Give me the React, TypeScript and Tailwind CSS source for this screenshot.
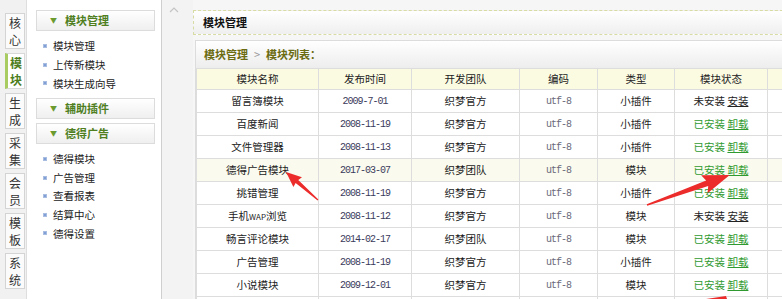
const cjk = 'font-["Noto_Sans_CJK_SC",sans-serif]';

const tabs = [
  { label: ['核', '心'] },
  { label: ['模', '块'], active: true },
  { label: ['生', '成'] },
  { label: ['采', '集'] },
  { label: ['会', '员'] },
  { label: ['模', '板'] },
  { label: ['系', '统'] },
];

type Row = {
  name: string;
  date: string;
  team: string;
  type: string;
  installed: boolean;
  hl?: boolean;
};

const rows: Row[] = [
  { name: '留言簿模块', date: '2009-7-01', team: '织梦官方', type: '小插件', installed: false },
  { name: '百度新闻', date: '2008-11-19', team: '织梦官方', type: '小插件', installed: true },
  { name: '文件管理器', date: '2008-11-13', team: '织梦官方', type: '小插件', installed: true },
  { name: '德得广告模块', date: '2017-03-07', team: '织梦团队', type: '模块', installed: true, hl: true },
  { name: '挑错管理', date: '2008-11-19', team: '织梦官方', type: '小插件', installed: true },
  { name: '手机WAP浏览', date: '2008-11-12', team: '织梦官方', type: '模块', installed: false },
  { name: '畅言评论模块', date: '2014-02-17', team: '织梦团队', type: '模块', installed: true },
  { name: '广告管理', date: '2008-11-19', team: '织梦官方', type: '小插件', installed: true },
  { name: '小说模块', date: '2009-12-01', team: '织梦官方', type: '模块', installed: true },
];

const MenuHeader = ({ title }: { title: string }) => (
  <div className="ml-[9px] flex h-[21px] w-[119px] items-center border border-[#dcdcdc] bg-gradient-to-b from-white to-[#efefef]">
    <span className="ml-[13px] text-[7px] leading-none text-[#6b9a2e]">▼</span>
    <span className="ml-[8px] text-[11px] font-bold text-[#4f7f1f]">{title}</span>
  </div>
);

const MenuItem = ({ text }: { text: string }) => (
  <div className="flex h-[18.6px] items-center">
    <span className="ml-[16px] h-[4px] w-[4px] border border-[#a9bde0] bg-[#7f9fd6]" />
    <span className="ml-[6px] text-[10.5px] text-[#222]">{text}</span>
  </div>
);

const Status = ({ installed }: { installed: boolean }) =>
  installed ? (
    <span className="text-[#2f9a2f]">
      已安装 <span className="underline">卸载</span>
    </span>
  ) : (
    <span className="text-[#222]">
      未安装 <span className="underline">安装</span>
    </span>
  );

const Arrows = () => (
  <svg className="pointer-events-none absolute left-0 top-0" width={782} height={299}>
    <g transform="translate(318 200) rotate(221.2)" fill="#ec2b2b">
      <polygon points="0,-0.6 28,-2 27,-6.5 42.5,0 27,6.5 28,2 0,0.6" />
    </g>
    <g transform="translate(647 205) rotate(-19.9)" fill="#ec2b2b">
      <polygon points="0,-0.8 64,-3 61,-9.5 88,0 61,9.5 64,3 0,0.8" />
    </g>
    <polygon points="706,299 726,296 727,299" fill="#ec2b2b" />
  </svg>
);

export default function App() {
  return (
    <div className={`relative flex h-[299px] w-[782px] overflow-hidden bg-white ${cjk}`}>
      {/* Tab strip */}
      <div className="flex w-[27px] shrink-0 flex-col items-end border-r border-[#dedede] bg-[#f1f1f1] pt-[13px] pr-[1px]">
        {tabs.map((t, i) => (
          <div
            key={i}
            className={`mb-[4px] flex h-[36px] w-[20px] flex-col items-center justify-center border text-[12px] leading-[17px] ${
              t.active
                ? 'border-[#d8d8d8] border-l-[3px] border-l-[#a9cc62] bg-white font-bold text-[#4d7d1d]'
                : 'border-[#d4d4d4] bg-[#fbfbfb] text-[#333]'
            }`}
          >
            <span>{t.label[0]}</span>
            <span>{t.label[1]}</span>
          </div>
        ))}
      </div>

      {/* Sidebar menu */}
      <div className="flex w-[134px] shrink-0 flex-col bg-white pt-[10px]">
        <MenuHeader title="模块管理" />
        <div className="pt-[6px] pb-[5px]">
          <MenuItem text="模块管理" />
          <MenuItem text="上传新模块" />
          <MenuItem text="模块生成向导" />
        </div>
        <MenuHeader title="辅助插件" />
        <div className="h-[4px]" />
        <MenuHeader title="德得广告" />
        <div className="pt-[6px]">
          <MenuItem text="德得模块" />
          <MenuItem text="广告管理" />
          <MenuItem text="查看报表" />
          <MenuItem text="结算中心" />
          <MenuItem text="德得设置" />
        </div>
      </div>

      {/* Scroll gutter */}
      <div className="w-[32px] shrink-0 border-l border-[#cfcfcf] bg-[#f3f3f3]">
        <svg width="10" height="6" className="ml-[7px] mt-[7px]" viewBox="0 0 10 6">
          <path d="M1 5 L5 1 L9 5" fill="none" stroke="#c4c4c4" strokeWidth="1.2" />
        </svg>
      </div>

      {/* Main */}
      <div className="flex min-w-0 flex-1 flex-col bg-[#f6f6f6] pt-[10px]">
        <div className="flex h-[25px] w-[620px] shrink-0 items-center border border-dashed border-[#d8dca4] bg-gradient-to-b from-white to-[#efefef] pl-[9px] text-[11px] font-bold text-[#111]">
          模块管理
        </div>
        <div className="mt-[5px] ml-[2px] w-[640px] shrink-0 border border-[#dcdcdc] bg-white">
          <div className="flex h-[27px] items-center bg-gradient-to-b from-white to-[#ededed] pl-[8px] text-[11px] font-bold text-[#6b6b12]">
            模块管理
            <span className="mx-[6px] font-normal text-[#999]">&gt;</span>
            模块列表：
          </div>
          <table className="w-[640px] table-fixed border-collapse text-center text-[10.5px] text-[#222]">
            <colgroup>
              <col className="w-[122px]" />
              <col className="w-[93px]" />
              <col className="w-[108px]" />
              <col className="w-[78px]" />
              <col className="w-[77px]" />
              <col className="w-[93px]" />
              <col />
            </colgroup>
            <thead>
              <tr className="h-[21px] bg-[#fbfbe2]">
                {['模块名称', '发布时间', '开发团队', '编码', '类型', '模块状态', ''].map((h, i) => (
                  <th key={i} className="border border-[#dddddd] p-0 font-normal">
                    {h}
                  </th>
                ))}
              </tr>
            </thead>
            <tbody>
              {rows.map((r, i) => (
                <tr key={i} className={`h-[23px] ${r.hl ? 'bg-[#fafaee]' : 'bg-white'}`}>
                  <td className="border border-[#dddddd] p-0">
                    {r.name === '手机WAP浏览' ? (
                      <>
                        手机<span className="text-[8px]">WAP</span>浏览
                      </>
                    ) : (
                      r.name
                    )}
                  </td>
                  <td className='border border-[#dddddd] p-0 font-["Liberation_Mono",monospace] text-[10px] tracking-[-1px] text-[#3b3b5c]'>
                    {r.date}
                  </td>
                  <td className="border border-[#dddddd] p-0">{r.team}</td>
                  <td className='border border-[#dddddd] p-0 font-["Liberation_Mono",monospace] text-[10px] tracking-[-1px] text-[#6a6a7a]'>
                    utf-8
                  </td>
                  <td className="border border-[#dddddd] p-0">{r.type}</td>
                  <td className="border border-[#dddddd] p-0">
                    <Status installed={r.installed} />
                  </td>
                  <td className="border border-[#dddddd] p-0" />
                </tr>
              ))}
              <tr className="h-[23px]">
                {Array.from({ length: 7 }).map((_, i) => (
                  <td key={i} className="border border-[#dddddd] p-0" />
                ))}
              </tr>
            </tbody>
          </table>
        </div>
      </div>

      <Arrows />
    </div>
  );
}
